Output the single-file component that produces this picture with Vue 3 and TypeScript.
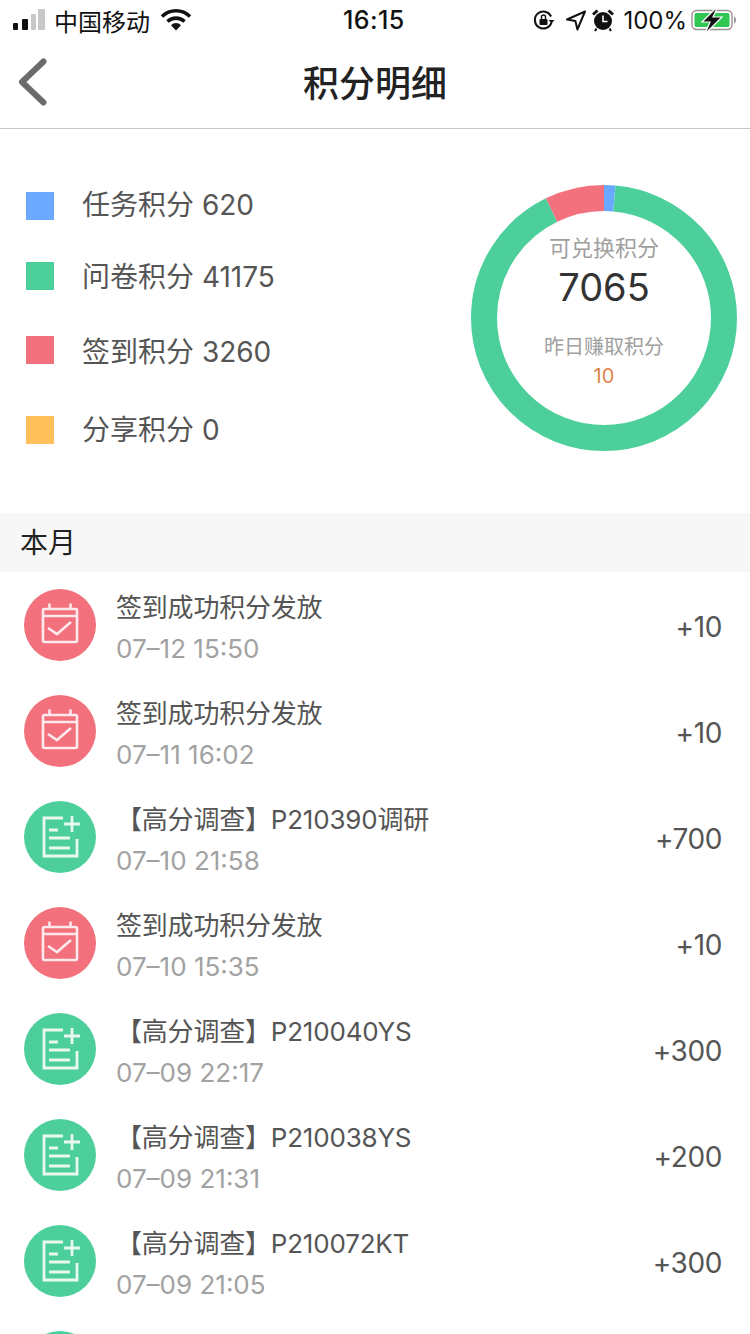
<script setup lang="ts">
// 积分明细页
interface Legend {
  name: string
  value: number
  color: string
  cls: string
}

interface PointRecord {
  kind: 'sign' | 'survey'
  title: string
  time: string
  amount: string
}

const legends: Legend[] = [
  { name: '任务积分', value: 620, color: '#6aa9ff', cls: 'l-task' },
  { name: '问卷积分', value: 41175, color: '#4ccf9b', cls: 'l-survey' },
  { name: '签到积分', value: 3260, color: '#f2717d', cls: 'l-sign' },
  { name: '分享积分', value: 0, color: '#ffc05c', cls: 'l-share' },
]

const records: PointRecord[] = [
  { kind: 'sign', title: '签到成功积分发放', time: '07–12 15:50', amount: '+10' },
  { kind: 'sign', title: '签到成功积分发放', time: '07–11 16:02', amount: '+10' },
  { kind: 'survey', title: '【高分调查】P210390调研', time: '07–10 21:58', amount: '+700' },
  { kind: 'sign', title: '签到成功积分发放', time: '07–10 15:35', amount: '+10' },
  { kind: 'survey', title: '【高分调查】P210040YS', time: '07–09 22:17', amount: '+300' },
  { kind: 'survey', title: '【高分调查】P210038YS', time: '07–09 21:31', amount: '+200' },
  { kind: 'survey', title: '【高分调查】P210072KT', time: '07–09 21:05', amount: '+300' },
  { kind: 'survey', title: '', time: '', amount: '' },
]

// 环形图分段，从 12 点方向顺时针
const radius = 120
const circumference = 2 * Math.PI * radius
const total = legends.reduce((sum, item) => sum + item.value, 0)
let offset = 0
const segments = legends
  .filter((item) => item.value > 0)
  .map((item) => {
    const len = (item.value / total) * circumference
    const seg = { color: item.color, dash: `${len} ${circumference - len}`, offset: -offset }
    offset += len
    return seg
  })
</script>

<template>
  <div class="page">
    <div class="status-bar">
      <div class="status-left">
        <svg class="signal" width="34" height="24" viewBox="0 0 34 24">
          <rect x="1" y="15" width="5" height="7" rx="1" fill="#111" />
          <rect x="10" y="11" width="6" height="11" rx="1" fill="#111" />
          <rect x="19" y="6" width="5" height="16" rx="1" fill="#c8c8c8" />
          <rect x="26" y="1" width="7" height="21" rx="1" fill="#c8c8c8" />
        </svg>
        <span class="carrier">中国移动</span>
        <svg class="wifi" width="32" height="24" viewBox="0 0 32 24">
          <path d="M2 8.500a20 20 0 0 1 28 0" fill="none" stroke="#111" stroke-width="3.600" />
          <path d="M7.500 13.500a12.500 12.500 0 0 1 17 0" fill="none" stroke="#111" stroke-width="3.600" />
          <path d="M11 17.200a7 7 0 0 1 10 0L16 22.500z" fill="#111" />
        </svg>
      </div>
      <span class="clock">16:15</span>
      <div class="status-right">
        <svg width="24" height="24" viewBox="0 0 24 24">
          <path d="M19.500 14.500a8.500 8.500 0 1 1-.4-6" fill="none" stroke="#111" stroke-width="2" />
          <path d="M22.500 12l-3 3.600-3-3.600z" fill="#111" />
          <rect x="7.500" y="11" width="8" height="6" rx="1" fill="#111" />
          <path d="M9.500 11V9a2 2 0 0 1 4 0v2" fill="none" stroke="#111" stroke-width="1.400" />
        </svg>
        <svg class="arrow" width="22" height="24" viewBox="0 0 22 24">
          <path d="M20 3.500L2 11.500l8.400 1.600 2 8.400z" fill="none" stroke="#111" stroke-width="2" stroke-linejoin="round" />
        </svg>
        <svg class="alarm" width="22" height="24" viewBox="0 0 22 24">
          <circle cx="11" cy="13" r="9" fill="#111" />
          <path d="M1 6.500L5.500 2.500M21 6.500L16.500 2.500" stroke="#111" stroke-width="3" />
          <path d="M11 7.500V13.500H15.500" fill="none" stroke="#fff" stroke-width="1.600" />
          <path d="M4.500 20.500L3 23M17.500 20.500L19 23" stroke="#111" stroke-width="2" />
        </svg>
        <span class="percent">100%</span>
        <svg class="battery" width="46" height="28" viewBox="0 0 46 28">
          <rect x="1" y="4.500" width="40" height="19" rx="4.500" fill="none" stroke="#9c8f8f" stroke-width="1.400" />
          <rect x="3.500" y="7" width="35" height="14" rx="2" fill="#2fc652" />
          <path d="M43 10.500c1.500.4 2 1.600 2 3.500s-.5 3.100-2 3.500z" fill="#9a9a9a" />
          <path d="M27 0L11 16h8l-5 12 17-17h-9z" fill="#111" stroke="#fff" stroke-width="1.200" />
        </svg>
      </div>
    </div>

    <div class="nav-bar">
      <svg class="back" width="32" height="50" viewBox="0 0 32 50">
        <path d="M26.500 4.500L5 25l21.500 20.500" fill="none" stroke="#6b6b6b" stroke-width="6" stroke-linecap="round" stroke-linejoin="round" />
      </svg>
      <span class="nav-title">积分明细</span>
    </div>

    <div class="summary">
      <ul class="legend">
        <li v-for="item in legends" :key="item.name" class="legend-item" :class="item.cls">
          <i class="legend-dot" :style="{ background: item.color }"></i>
          <span class="legend-text">{{ item.name }} {{ item.value }}</span>
        </li>
      </ul>
      <div class="donut">
        <svg width="266" height="266" viewBox="0 0 266 266">
          <circle
            v-for="seg in segments"
            :key="seg.color"
            cx="133"
            cy="133"
            :r="radius"
            fill="none"
            :stroke="seg.color"
            stroke-width="26"
            :stroke-dasharray="seg.dash"
            :stroke-dashoffset="seg.offset"
            transform="rotate(-90 133 133)"
          />
        </svg>
        <div class="donut-text">
          <span class="donut-label">可兑换积分</span>
          <span class="donut-value">7065</span>
          <span class="donut-sub">昨日赚取积分</span>
          <span class="donut-earn">10</span>
        </div>
      </div>
    </div>

    <div class="section-title">本月</div>

    <ul class="records">
      <li v-for="(rec, index) in records" :key="index" class="record">
        <span class="record-icon" :class="rec.kind">
          <svg v-if="rec.kind === 'sign'" width="44" height="44" viewBox="0 0 44 44">
            <g fill="none" stroke="#fff" stroke-width="2.600" opacity="0.85">
              <rect x="5" y="6" width="34" height="33" rx="1.500" />
              <path d="M5 13H39M11.500 0.500V6M32.500 0.500V6" />
              <path d="M10 25L19 31L33 19" />
            </g>
          </svg>
          <svg v-else width="44" height="44" viewBox="0 0 44 44">
            <g fill="none" stroke="#fff" stroke-width="2.800" opacity="0.88">
              <path d="M25 3H6V41H39V24" />
              <path d="M11 15H20M11 23H32M11 33H32" />
              <path d="M34 1V17M26 9H42" />
            </g>
          </svg>
        </span>
        <div class="record-main">
          <div class="record-title">{{ rec.title }}</div>
          <div class="record-time">{{ rec.time }}</div>
        </div>
        <span class="record-amount">{{ rec.amount }}</span>
      </li>
    </ul>
  </div>
</template>

<style>
html,
body {
  margin: 0;
  background: #fff;
}
</style>

<style scoped>
.page {
  width: 750px;
  height: 1334px;
  overflow: hidden;
  background: #fff;
  color: #333;
  font-family: Inter, "Noto Sans CJK SC", sans-serif;
}

ul {
  list-style: none;
  margin: 0;
  padding: 0;
}

.status-bar {
  height: 40px;
  display: flex;
  align-items: center;
  justify-content: space-between;
  position: relative;
  padding: 0 13px 0 12px;
  color: #111;
  font-size: 24px;
}

.status-left,
.status-right {
  display: flex;
  align-items: center;
}

.carrier {
  margin-left: 8px;
}

.wifi {
  margin-left: 10px;
}

.clock {
  position: absolute;
  left: 343px;
  top: 5px;
  font-size: 25px;
  font-weight: 500;
  letter-spacing: 0.4px;
}

.status-right {
  gap: 8px;
}

.arrow {
  margin-left: 1px;
}

.alarm {
  margin-left: -3px;
}

.percent {
  margin-left: 1px;
}

.battery {
  margin-left: -4px;
}

.nav-bar {
  height: 88px;
  border-bottom: 1px solid #c4c4c4;
  display: flex;
  align-items: center;
  justify-content: center;
  position: relative;
}

.back {
  position: absolute;
  left: 17px;
  top: 17px;
}

.nav-title {
  font-size: 36px;
  font-weight: 500;
  color: #222;
  margin-bottom: 6px;
}

.summary {
  height: 384px;
  display: flex;
  justify-content: space-between;
  padding: 55px 13px 0 26px;
  box-sizing: border-box;
}

.legend {
  padding-top: 8px;
}

.legend-item {
  display: flex;
  align-items: center;
  gap: 28px;
  height: 28px;
  font-size: 28px;
  color: #555;
}

.l-task .legend-text {
  margin-bottom: 6px;
}

.l-survey {
  margin-top: 42px;
}

.l-survey .legend-text {
  margin-bottom: 2px;
}

.l-sign {
  margin-top: 46px;
}

.l-share {
  margin-top: 52px;
}

.l-share .legend-text {
  margin-bottom: 4px;
}

.legend-dot {
  width: 28px;
  height: 28px;
  flex-shrink: 0;
}

.donut {
  position: relative;
  width: 266px;
  height: 266px;
  margin-top: 1px;
  flex-shrink: 0;
}

.donut svg {
  display: block;
}

.donut-text {
  position: absolute;
  inset: 0;
  display: flex;
  flex-direction: column;
  align-items: center;
  padding-top: 48px;
  box-sizing: border-box;
}

.donut-label {
  font-size: 22px;
  line-height: 30px;
  color: #a0a0a0;
}

.donut-value {
  font-size: 38px;
  line-height: 48px;
  color: #333;
}

.donut-sub {
  margin-top: 22px;
  font-size: 20px;
  line-height: 28px;
  color: #a0a0a0;
}

.donut-earn {
  font-size: 20px;
  line-height: 30px;
  color: #e0854a;
}

.section-title {
  height: 59px;
  line-height: 61px;
  padding-left: 20px;
  background: #f7f7f7;
  font-size: 28px;
  color: #222;
}

.record {
  height: 106px;
  display: flex;
  align-items: flex-start;
  padding: 0 28px 0 24px;
}

.record-icon {
  width: 72px;
  height: 72px;
  margin-top: 17px;
  border-radius: 50%;
  display: flex;
  align-items: center;
  justify-content: center;
  flex-shrink: 0;
}

.record-icon.sign {
  background: #f2717d;
}

.record-icon.survey {
  background: #4ccf9b;
}

.record-main {
  flex: 1;
  min-width: 0;
  margin-left: 20px;
  padding-top: 16px;
}

.record-title {
  height: 40px;
  line-height: 40px;
  font-size: 26px;
  letter-spacing: -0.2px;
  color: #555;
}

.record-time {
  height: 42px;
  line-height: 42px;
  font-size: 26px;
  color: #a2a2a2;
}

.record-amount {
  align-self: center;
  padding-top: 4px;
  font-size: 28px;
  letter-spacing: -0.4px;
  color: #555;
}
</style>
